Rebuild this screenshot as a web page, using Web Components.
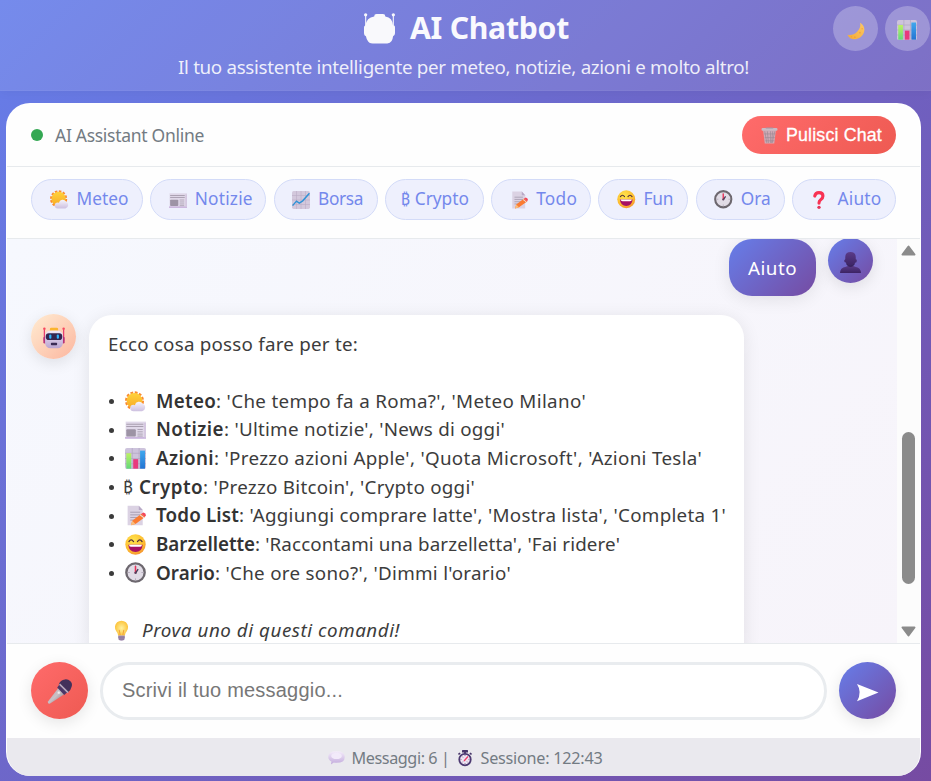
<!DOCTYPE html>
<html lang="it">
<head>
<meta charset="utf-8">
<title>AI Chatbot</title>
<style>
html,body{margin:0;height:100%;overflow:hidden}
body{font-family:"Noto Sans","Open Sans",sans-serif;background:linear-gradient(135deg,#667eea 0%,#764ba2 100%)}
</style>
</head>
<body>
<chat-app></chat-app>
<script>
const ICONS = {
robot:`<defs><linearGradient id="g" x2="0" y2="1"><stop stop-color="#f1eaf8"/><stop offset="1" stop-color="#b9a3d0"/></linearGradient></defs><path d="M2 4v16M30 4v16" stroke="#e83e70" stroke-width="1.8"/><circle cx="2" cy="2.500" r="1.800" fill="#f8475e"/><circle cx="30" cy="2.500" r="1.800" fill="#f8475e"/><rect x="0.500" y="14" width="4" height="10" rx="2" fill="#b73378"/><rect x="27.500" y="14" width="4" height="10" rx="2" fill="#b73378"/><rect x="10" y="1" width="12" height="6" rx="2" fill="#fbb42f"/><rect x="3" y="5" width="26" height="26" rx="8" fill="url(#g)"/><rect x="4" y="9" width="24" height="10" rx="4.500" fill="#33264f"/><rect x="9" y="11" width="3.200" height="6" rx="1.500" fill="#2fb4fb"/><rect x="20" y="11" width="3.200" height="6" rx="1.500" fill="#2fb4fb"/><rect x="11.500" y="23" width="9" height="3.500" rx="1" fill="#3a2b55"/>`,
robotwhite:`<g fill="#f9f9fc"><circle cx="1.700" cy="1.900" r="1.700"/><circle cx="30.300" cy="1.900" r="1.700"/><path d="M1.200 2h1.100v20H1.200zM29.700 2h1.100v20h-1.100z"/><path d="M10.500 3.500Q10.500 1 13 1h6.500Q22 1 22 3.500 29.500 4.500 30 13h1q1 0 1 2v6q0 2-2 3-.3 3-1.500 5-1.500 2.500-4.500 2.500H9Q5 31.500 3.700 28.500 2.500 26.500 2 24 0 23.500 0 21v-6q0-2 1.500-2Q2.500 4.500 10.500 3.500z"/></g>`,
moon:`<defs><linearGradient id="g" x1="1" x2="0" y2="1"><stop stop-color="#fdc766"/><stop offset="1" stop-color="#f4ab35"/></linearGradient></defs><path d="M23 1.500C31 5 34 16 27 24 19 33.500 5 33 1 22.500c5 2 12 .2 17-5C23 12 25 7 23 1.500z" fill="url(#g)"/><g fill="#ee9a35" opacity=".65"><circle cx="23" cy="19" r="1.600"/><circle cx="14" cy="27" r="1.500"/><circle cx="27" cy="12" r="1.400"/><circle cx="8" cy="26" r="1.200"/></g>`,
bars:`<defs><linearGradient id="a" x2="0" y2="1"><stop stop-color="#bdf263"/><stop offset="1" stop-color="#62d97b"/></linearGradient><linearGradient id="b" x2="0" y2="1"><stop stop-color="#40a8ee"/><stop offset="1" stop-color="#2374d2"/></linearGradient></defs><rect width="32" height="32" rx="3" fill="#cdc3dc"/><path d="M0 8h32M0 16h32M0 24h32M11 0v32M21.500 0v32" stroke="#aea3bf" stroke-width="1"/><rect x="2" y="8" width="7.500" height="23.500" fill="url(#a)"/><rect x="12.500" y="17" width="7.500" height="14.500" fill="#e8397d"/><rect x="23" y="4" width="7.500" height="27.500" fill="url(#b)"/>`,
trash:`<path d="M4 6h24l-3 25H7z" fill="#cfaab5"/><path d="M7 8l4 22M12 8l2 22M18 8v22M22 8l-2 22M26 8l-5 22M6 13h21M7 20h19M8 26h17" stroke="#9d8a95" stroke-width="1.300" fill="none"/><rect x="1" y="2" width="30" height="5" rx="2" fill="#c8bcc5"/><path d="M9 2h14" stroke="#a394a1" stroke-width="2"/>`,
weather:`<defs><linearGradient id="g" x2="0" y2="1"><stop stop-color="#ffd23c"/><stop offset="1" stop-color="#f8aa25"/></linearGradient><linearGradient id="c" x2="0" y2="1"><stop stop-color="#f7f5fb"/><stop offset="1" stop-color="#cdc0e0"/></linearGradient></defs><circle cx="14.500" cy="15" r="12.700" fill="none" stroke="#fa8a30" stroke-width="3.600" stroke-dasharray="4.200 2.450"/><circle cx="14.500" cy="15" r="12" fill="url(#g)"/><path d="M13 31a5 5 0 0 1 0-10q1.500 0 2 .6a6.500 6.500 0 0 1 12-2A6 6 0 0 1 26 31z" fill="url(#c)"/>`,
news:`<rect x="1" y="4" width="31" height="26" fill="#e0d8e9"/><rect x="0" y="27.500" width="32" height="2.500" fill="#c9b2dd"/><rect x="29" y="6" width="3" height="22" fill="#d4c7e0"/><path d="M2 8h26M2 11.500h26" stroke="#a99fb0" stroke-width="1.700"/><rect x="2" y="15.500" width="14.500" height="11" rx="1.500" fill="#9d93a5"/><path d="M19 16h8M19 19.500h8M19 23h8M19 26h8" stroke="#a99fb0" stroke-width="1.400"/>`,
chart:`<rect width="32" height="32" rx="3" fill="#d3c8dc"/><path d="M0 8h32M0 16h32M0 24h32M8 0v32M16 0v32M24 0v32" stroke="#b9acc4" stroke-width="1"/><path d="M1 26l7-8 5 3.500 6-4L31 4" stroke="#2f92d6" stroke-width="2.600" fill="none"/>`,
memo:`<path d="M4 1h17l6 6.500V31H4z" fill="#dbd2e3"/><path d="M21 1v6.500h6z" fill="#b8a9c6"/><path d="M8 11h15M8 15h15M8 19h12M8 23h8" stroke="#a59bae" stroke-width="1.400"/><path d="M9 31l2-7L25 13.500l6 4.500-15 11z" fill="#fb7b31"/><path d="M25 13.500l3-2q4 1 4 4.500l-2 2z" fill="#f2465a"/><path d="M23 15l6 4.500" stroke="#eae3ef" stroke-width="1.600"/><path d="M9 31l2-7 5 5z" fill="#f9bd7b"/>`,
laugh:`<defs><radialGradient id="g" cx=".4" cy=".3" r=".8"><stop stop-color="#ffe54d"/><stop offset=".65" stop-color="#fdbb2f"/><stop offset="1" stop-color="#f28431"/></radialGradient></defs><circle cx="16" cy="16" r="15.500" fill="url(#g)"/><path d="M6 11.500q3.500-5 7 0M19 11.500q3.500-5 7 0" stroke="#51303b" stroke-width="2" fill="none" stroke-linecap="round"/><path d="M5 16.500h22Q26 27.500 16 27.500T5 16.500z" fill="#a71162"/><path d="M6.500 16.500h19v1q0 2-3 2h-13q-3 0-3-2z" fill="#fff"/>`,
clock:`<circle cx="16" cy="16" r="14" fill="#e1dce6" stroke="#6d686f" stroke-width="3.600"/><path d="M16 4.500v3M16 25v3M4.500 16h3M25 16h3" stroke="#b6adbd" stroke-width="1.500"/><path d="M16 17V6" stroke="#e93359" stroke-width="2.400"/><path d="M16 17l4-6" stroke="#4a3857" stroke-width="2.200"/><circle cx="16" cy="16.500" r="1.800" fill="#5b415e"/>`,
question:`<path d="M8.500 9Q9.500 3 16 3q7 0 7 6 0 4-4 6.500Q16 17.500 16 21.500" stroke="#f83253" stroke-width="5.600" fill="none" stroke-linecap="round"/><circle cx="16" cy="29" r="3" fill="#e5355a"/>`,
person:`<defs><linearGradient id="g" x2="0" y2="1"><stop stop-color="#5a3b88"/><stop offset="1" stop-color="#3c2363"/></linearGradient></defs><path d="M0 32Q0 24 9 22.500l3.500-1.500h7l3.500 1.500q9 1.500 9 9.500z" fill="url(#g)"/><path d="M8 8Q8 0 16 0t8 8v3q2 0 1.500 3T23 16q-2 6-7 6t-7-6q-2 0-2.500-2T8 11z" fill="url(#g)"/><path d="M9.500 18q6.500 8 13 0" stroke="#302052" stroke-width="1.300" fill="none"/>`,
bulb:`<defs><radialGradient id="g"><stop stop-color="#fff2a0"/><stop offset="1" stop-color="#fcc43c"/></radialGradient></defs><path d="M11 24q0-4-3-7A10 10 0 1 1 24 17q-3 3-3 7z" fill="url(#g)"/><path d="M14 23l-1.500-8M18 23l1.500-8" stroke="#f1a33c" stroke-width="1.500"/><path d="M11 23.500h10v4q0 4-5 4t-5-4z" fill="#a994b8"/><path d="M11 26h10M12 29h8" stroke="#796387" stroke-width="1.200"/>`,
mic:`<defs><linearGradient id="g" x2="1" y2="1"><stop stop-color="#b2a7ad"/><stop offset=".5" stop-color="#c9c1c6"/><stop offset="1" stop-color="#70666f"/></linearGradient></defs><path d="M1 29L15 11l8 8L4 31.500q-3 1-3-2.500z" fill="url(#g)"/><path d="M16 7l10 10-4 3.500L13 11z" fill="#4d3767"/><path d="M15 7Q17 1 23 .5q4-.5 7 2.500t1.500 7Q31 14 26 18z" fill="#43315a"/><path d="M16 6.500L27 17.500" stroke="#b9aabd" stroke-width="2"/><circle cx="15" cy="17.500" r="1.500" fill="#eee"/>`,
send:`<path d="M0 0L32 12.500 0 25.500Q8 12.500 0 0z" fill="#fff"/>`,
bubble:`<defs><linearGradient id="g" x2="0" y2="1"><stop stop-color="#f5edfb"/><stop offset="1" stop-color="#c2aadc"/></linearGradient></defs><path d="M16 4q15.500 0 15.500 11T16 26q-3 0-5-.5L5.500 29l1-5.500Q.5 20.500.5 15 .5 4 16 4z" fill="url(#g)"/><ellipse cx="16" cy="13" rx="10" ry="6" fill="#f2eafa"/>`,
stopwatch:`<rect x="10" y="0" width="12" height="5" rx="1" fill="#463468"/><path d="M16 4v4M26 6l3 3M6 6L3 9" stroke="#463468" stroke-width="3.500"/><circle cx="16" cy="19" r="11.500" fill="#eee5f3" stroke="#4c3971" stroke-width="3.500"/><path d="M14 22l8-9" stroke="#ef3d69" stroke-width="2.500"/><path d="M16 10v2M16 26v2M7 19h2M23 19h2M10 13l2 2M10 25l2-2M22 25l-2-2" stroke="#705d86" stroke-width="1.500"/>`
};
const define = (name, html, extra) => customElements.define(name, class extends HTMLElement {
  constructor(){ super(); this.attachShadow({mode:'open'}).innerHTML = html; }
  connectedCallback(){ if (extra) extra(this); }
});

/* Round gradient badge or button holding one icon */
define('round-badge', `<style>:host{display:flex;align-items:center;justify-content:center;flex:none;box-sizing:border-box;border-radius:50%;width:45px;height:45px;background:var(--bg);box-shadow:var(--shadow,0 4px 15px rgba(0,0,0,.1))}</style><slot></slot>`);

/* Quick command pill */
define('quick-chip', `<style>:host{display:flex;align-items:center;flex:none;box-sizing:border-box;height:41px;border:1px solid #d3dbf8;border-radius:21px;background:#eef0fd;color:#7488ec;font-size:17.300px;line-height:24px;padding-left:17.500px}</style><slot></slot>`);

/* Speech bubble */
define('chat-bubble', `<style>:host{display:block;flex:none;box-sizing:border-box;border-radius:23px;padding:14.500px 19px;background:#fff;color:#3c3c3c;font-size:18.800px;line-height:28.650px;box-shadow:0 3px 18px rgba(0,0,0,.09)}
:host([mine]){background:linear-gradient(135deg,#667eea,#764ba2);color:#fff}</style><slot></slot>`);

/* One command of the help list */
define('command-line', `<style>:host{display:flex;align-items:center;height:28.650px;white-space:pre}.dot{width:5px;height:5px;border-radius:50%;background:#3b3b3b;margin:1px 11px 0 1px;flex:none}::slotted([bold]){font-weight:600;color:#333}</style><span class="dot"></span><slot></slot>`);

define('app-header', `<style>
:host{display:flex;box-sizing:border-box;height:91px;background:rgba(255,255,255,.1);border-bottom:1px solid rgba(255,255,255,.04);box-shadow:0 2px 10px rgba(0,0,0,.04);position:relative;flex-direction:column;align-items:center;color:#fff}
h1{margin:7px 0 0 2px;height:42px;display:flex;align-items:center;gap:15px;font-size:30.200px;line-height:42px;font-weight:700;color:#f9f9fe}
h1 emoji-icon{margin-top:1px}
p{margin:5px 0 0 -4px;font-size:18.800px;line-height:27px;color:rgba(255,255,255,.88)}
nav{position:absolute;top:6px;right:1.500px;display:flex;gap:7px}
round-badge{--bg:rgba(255,255,255,.25);--shadow:none}
</style>
<h1><emoji-icon name="robotwhite" s="31"></emoji-icon><fit-text w="159">AI Chatbot</fit-text></h1>
<p><fit-text w="571">Il tuo assistente intelligente per meteo, notizie, azioni e molto altro!</fit-text></p>
<nav><round-badge><emoji-icon name="moon" s="18" style="margin:5px 0 0 1px"></emoji-icon></round-badge><round-badge><emoji-icon name="bars" s="20" style="margin-top:3px"></emoji-icon></round-badge></nav>`);

define('chat-status', `<style>
:host{display:flex;align-items:center;height:62px;box-sizing:content-box;border-bottom:1px solid #e7eaed;padding:0 24px;color:#737b83;font-size:17.500px;line-height:24px}
i{width:12px;height:12px;border-radius:50%;background:#34a853;margin-right:12px}
button{margin:0 0 0 auto;width:154px;height:38px;border:0;border-radius:19px;padding:0 0 0 18.500px;background:linear-gradient(135deg,#ff6b6b,#ee5a52);color:#fff;font:500 17.800px "Liberation Sans",sans-serif;display:flex;align-items:center;gap:8.500px;-webkit-text-stroke:.3px #fff}
</style><i></i><fit-text w="149">AI Assistant Online</fit-text><button><emoji-icon name="trash" s="17"></emoji-icon><fit-text w="96">Pulisci Chat</fit-text></button>`);

define('quick-bar', `<style>
:host{display:flex;align-items:center;justify-content:space-between;height:71px;padding:0 24px;border-bottom:1px solid #e7eaed;box-sizing:content-box}
quick-chip{margin-top:-6px}fit-text{margin-left:8px;margin-top:-2px}
</style>
<quick-chip style="width:112px"><emoji-icon name="weather" s="19"></emoji-icon><fit-text w="52">Meteo</fit-text></quick-chip>
<quick-chip style="width:116px"><emoji-icon name="news" s="18"></emoji-icon><fit-text w="58">Notizie</fit-text></quick-chip>
<quick-chip style="width:104px"><emoji-icon name="chart" s="18"></emoji-icon><fit-text w="45">Borsa</fit-text></quick-chip>
<quick-chip style="width:99px;padding-left:15px"><fit-text w="9" style="margin-left:0;font-size:16px">₿</fit-text><fit-text w="54" style="margin-left:5px">Crypto</fit-text></quick-chip>
<quick-chip style="width:100px;padding-left:18px"><emoji-icon name="memo" s="18"></emoji-icon><fit-text w="41">Todo</fit-text></quick-chip>
<quick-chip style="width:90px"><emoji-icon name="laugh" s="18.500"></emoji-icon><fit-text w="30">Fun</fit-text></quick-chip>
<quick-chip style="width:89px"><emoji-icon name="clock" s="18.500"></emoji-icon><fit-text w="30">Ora</fit-text></quick-chip>
<quick-chip style="width:104px"><emoji-icon name="question" s="18"></emoji-icon><fit-text w="44" style="margin-left:9px">Aiuto</fit-text></quick-chip>`);

define('message-list', `<style>
:host{display:flex;height:404px;background:linear-gradient(135deg,#f6f8fe,#f7f4fa);border-bottom:1px solid #e7eaed;overflow:hidden}
.log{flex:1;height:404px;overflow:hidden;padding:0 24px;box-sizing:border-box}
.row{display:flex;align-items:flex-start;gap:13px}
.mine{justify-content:flex-end;height:75px;gap:12px}
.text{height:28.650px;white-space:pre;display:flex;align-items:center}
.bar{width:23px;background:#fcfcfc;display:flex;flex-direction:column;align-items:center}
.thumb{width:13px;height:152px;border-radius:7px;background:#8b8b8b;margin:176px 0 42px}
.bar svg{flex:none;width:15px;height:11px}
.ic{margin:0 10px 0 0}
</style>
<div class="log">
<div class="row mine"><chat-bubble mine style="width:87px;height:57px"><fit-text w="49">Aiuto</fit-text></chat-bubble><round-badge style="--bg:linear-gradient(135deg,#667eea,#764ba2);margin-top:-1px"><emoji-icon name="person" s="21" style="margin-top:3px"></emoji-icon></round-badge></div>
<div class="row"><round-badge style="--bg:linear-gradient(135deg,#ffecd2,#fcb69f)"><emoji-icon name="robot" s="22" style="margin-top:2px"></emoji-icon></round-badge>
<chat-bubble style="width:655px;height:350px;margin-top:1px">
<div class="text"><fit-text w="250">Ecco cosa posso fare per te:</fit-text></div><div class="text"></div>
<command-line><emoji-icon name="weather" s="21" class="ic"></emoji-icon><fit-text w="60" bold>Meteo</fit-text><fit-text w="370">: 'Che tempo fa a Roma?', 'Meteo Milano'</fit-text></command-line>
<command-line><emoji-icon name="news" s="21" class="ic"></emoji-icon><fit-text w="68" bold>Notizie</fit-text><fit-text w="281">: 'Ultime notizie', 'News di oggi'</fit-text></command-line>
<command-line><emoji-icon name="bars" s="21" class="ic"></emoji-icon><fit-text w="58" bold>Azioni</fit-text><fit-text w="488">: 'Prezzo azioni Apple', 'Quota Microsoft', 'Azioni Tesla'</fit-text></command-line>
<command-line><fit-text w="9" style="margin:0 7px 0 -2px;font-size:17px">₿</fit-text><fit-text w="64" bold>Crypto</fit-text><fit-text w="272">: 'Prezzo Bitcoin', 'Crypto oggi'</fit-text></command-line>
<command-line><emoji-icon name="memo" s="21" class="ic"></emoji-icon><fit-text w="83" bold>Todo List</fit-text><fit-text w="487">: 'Aggiungi comprare latte', 'Mostra lista', 'Completa 1'</fit-text></command-line>
<command-line><emoji-icon name="laugh" s="21" class="ic"></emoji-icon><fit-text w="99" bold>Barzellette</fit-text><fit-text w="365">: 'Raccontami una barzelletta', 'Fai ridere'</fit-text></command-line>
<command-line><emoji-icon name="clock" s="21" class="ic"></emoji-icon><fit-text w="59" bold>Orario</fit-text><fit-text w="296">: 'Che ore sono?', 'Dimmi l'orario'</fit-text></command-line>
<div class="text"></div>
<div class="text"><emoji-icon name="bulb" s="21" style="margin:0 10px 0 3px"></emoji-icon><fit-text w="258" style="font-style:italic">Prova uno di questi comandi!</fit-text></div>
</chat-bubble></div></div>
<div class="bar"><svg viewBox="0 0 15 11" style="margin-top:6px"><path d="M7.500 1.500L13.500 9.500H1.500z" fill="#8b8b8b" stroke="#8b8b8b" stroke-width="2" stroke-linejoin="round"/></svg><div class="thumb"></div><svg viewBox="0 0 15 11"><path d="M7.500 9.500L13.500 1.500H1.500z" fill="#8b8b8b" stroke="#8b8b8b" stroke-width="2" stroke-linejoin="round"/></svg></div>`);

define('message-composer', `<style>
:host{display:flex;align-items:flex-start;gap:12px;height:94px;padding:18px 24px 0;box-sizing:border-box}
round-badge{width:57px;height:57px}
.field{flex:1;height:58px;box-sizing:border-box;border:3px solid #e9ecef;border-radius:29px;background:#fff;padding:0 0 3px 19px;display:flex;align-items:center;font:20px/26px "Liberation Sans",sans-serif;color:#777}
</style>
<round-badge style="--bg:linear-gradient(135deg,#ff6b6b,#ee5a52)"><emoji-icon name="mic" s="25" style="margin-top:2px"></emoji-icon></round-badge>
<div class="field"><fit-text w="221">Scrivi il tuo messaggio...</fit-text></div>
<round-badge style="--bg:linear-gradient(135deg,#667eea,#764ba2)"><emoji-icon name="send" s="21.500" style="margin-top:8px"></emoji-icon></round-badge>`);

define('chat-footer', `<style>
:host{display:flex;align-items:center;justify-content:center;height:37px;padding:1px 0 0 3px;background:#eae9ee;color:#737b83;font-size:16.200px;line-height:22px;white-space:pre}
</style><emoji-icon name="bubble" s="17"></emoji-icon><fit-text w="98" style="margin:0 7px">Messaggi: 6 |</fit-text><emoji-icon name="stopwatch" s="16"></emoji-icon><fit-text w="122" style="margin-left:8px">Sessione: 122:43</fit-text>`);

define('chat-app', `<style>
:host{display:block}
main{width:915px;height:673px;margin:12px 0 0 6px;box-sizing:border-box;border:1px solid rgba(255,255,255,.75);border-bottom:0;border-radius:24px;overflow:hidden;background:#fefefe}
</style><app-header></app-header><main><chat-status></chat-status><quick-bar></quick-bar><message-list></message-list><message-composer></message-composer><chat-footer></chat-footer></main>`);

define('emoji-icon', `<style>:host{display:block;flex:none}svg{display:block;overflow:visible}</style><svg viewBox="0 0 32 32"></svg>`, el => {
  const svg = el.shadowRoot.querySelector('svg'), s = el.getAttribute('s');
  svg.setAttribute('width', s); svg.setAttribute('height', s);
  svg.innerHTML = ICONS[el.getAttribute('name')];
});

/* Text run tracked so that it fills a given width */
define('fit-text', `<style>:host{display:inline-block;flex:none;white-space:pre}</style><slot></slot>`, el => {
  const w = +el.getAttribute('w'), n = el.textContent.length;
  const natural = el.getBoundingClientRect().width;
  if (n > 1) el.style.letterSpacing = ((w - natural) / n) + 'px';
  el.style.width = w + 'px';
});
</script>
</body>
</html>
